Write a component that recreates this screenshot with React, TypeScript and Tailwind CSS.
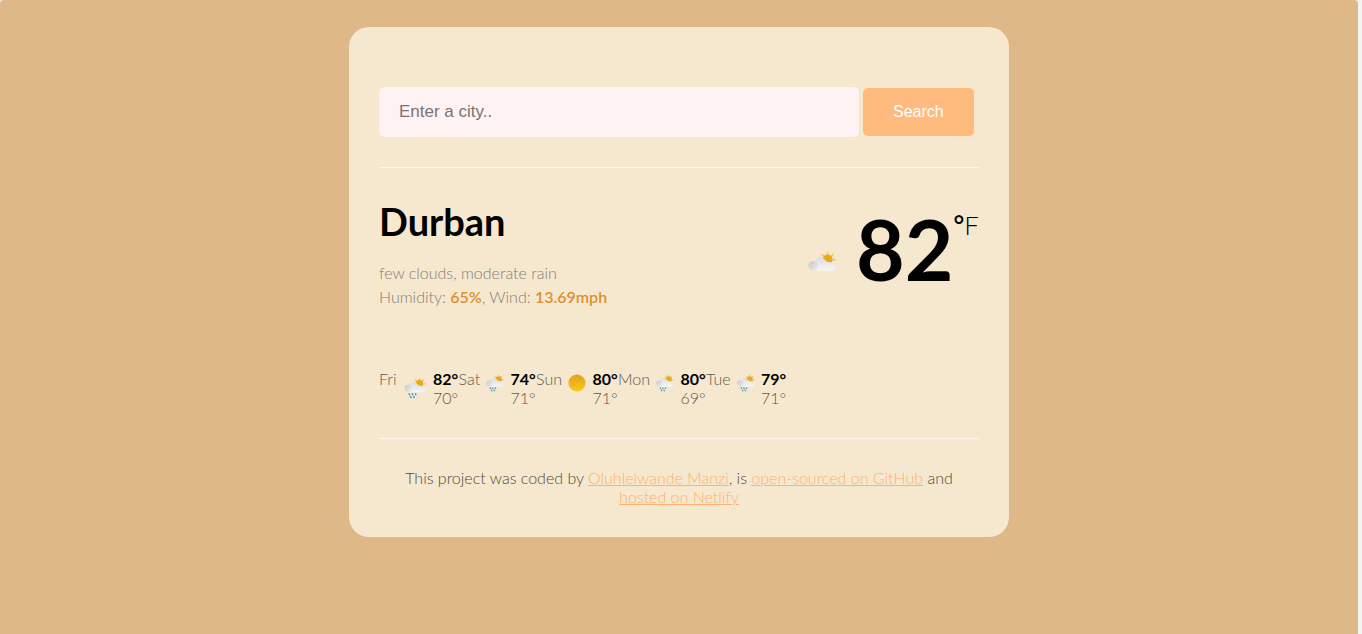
type WeatherKind = "clouds" | "rain" | "clear";

interface Day {
  name: string;
  kind: WeatherKind;
  high: number;
  low: number;
  large?: boolean;
}

const days: Day[] = [
  { name: "Fri", kind: "rain", high: 82, low: 70, large: true },
  { name: "Sat", kind: "rain", high: 74, low: 71 },
  { name: "Sun", kind: "clear", high: 80, low: 71 },
  { name: "Mon", kind: "rain", high: 80, low: 69 },
  { name: "Tue", kind: "rain", high: 79, low: 71 },
];

function WeatherIcon({ kind, className }: { kind: WeatherKind; className: string }) {
  if (kind === "clear") {
    return (
      <svg viewBox="0 0 18 18" className={className} aria-hidden="true">
        <defs>
          <linearGradient id="sun-disc" x1="0" y1="0" x2="0" y2="1">
            <stop offset="0" stopColor="#e4a018" />
            <stop offset="1" stopColor="#fac91e" />
          </linearGradient>
        </defs>
        <circle cx="9" cy="9" r="8.6" fill="url(#sun-disc)" />
        <circle cx="5" cy="11" r="0.8" fill="#dfa21a" />
        <circle cx="12" cy="5" r="0.8" fill="#d79916" />
      </svg>
    );
  }
  return (
    <svg viewBox="0 0 28 26" className={className} aria-hidden="true">
      <defs>
        <linearGradient id={`cloud-${kind}`} x1="0" y1="0" x2="0" y2="1">
          <stop offset="0" stopColor="#dcdcde" />
          <stop offset="1" stopColor="#f6f6f7" />
        </linearGradient>
        <linearGradient id={`puff-${kind}`} x1="0" y1="0" x2="1" y2="1">
          <stop offset="0" stopColor="#c9c9cb" />
          <stop offset="1" stopColor="#ececee" />
        </linearGradient>
      </defs>
      <g stroke="#f3bd45" strokeWidth="1.4" strokeLinecap="round">
        <path d="M19.500 1v1.500M14.200 2.600l1 1.200M24.800 2.400l-1 1.300M25.600 7.800l1.200.2M24.300 11.500l1.100.9" />
      </g>
      <circle cx="19.600" cy="7.600" r="5" fill="#e8aa1c" />
      <path
        d="M5 18.500C5 12 6.500 9.500 7.200 8.500A5.300 5.300 0 0 1 16 6.800c1 2 3.500 4 6.500 3.300 6.500.2 6.500 8.400 0 8.400z"
        fill={`url(#cloud-${kind})`}
      />
      <circle cx="5.200" cy="13.700" r="4.800" fill={`url(#puff-${kind})`} />
      {kind === "rain" && (
        <g stroke="#4a9dbd" strokeWidth="2" strokeLinecap="round">
          <path d="M6.500 20.500l.6 1M10.500 20.500l.6 1M14.500 20.500l.6 1M8.500 24l.6 1M12.500 24l.6 1" />
        </g>
      )}
    </svg>
  );
}

function Forecast() {
  return (
    <ul className="mt-[60px] flex flex-wrap">
      {days.map((day) => (
        <li key={day.name} className="flex items-start pb-px">
          <span className="font-light text-[#5f584e]">{day.name}</span>
          <WeatherIcon
            kind={day.kind}
            className={day.large ? "mx-[7px] mt-2 h-[22px] w-[22px]" : "mx-1.5 mt-[5px] h-[18px] w-[18px]"}
          />
          <span className="flex w-[26px] flex-col items-center">
            <strong className="font-bold text-black">{day.high}°</strong>
            <span className="font-light text-[#5f584e]">{day.low}°</span>
          </span>
        </li>
      ))}
    </ul>
  );
}

export default function App() {
  return (
    <div className="min-h-screen bg-[#f3f3f4] pr-1 font-['Lato',sans-serif] text-base leading-[19px]">
      <div className="min-h-screen rounded-t-[4px] bg-[#deb887] pt-[27px]">
        <main className="mx-auto max-w-[660px] rounded-[20px] bg-[#f6e8cf] px-[30px] pt-[60px] pb-[31px]">
          <form
            className="flex items-center gap-1 border-b border-[#fef2f2] pb-[30px]"
            onSubmit={(event) => event.preventDefault()}
          >
            <input
              type="search"
              aria-label="City"
              placeholder="Enter a city.."
              className="h-[50px] w-4/5 rounded-md bg-[#fef2f2] px-5 font-['Liberation_Sans',sans-serif] text-[17px] outline-none placeholder:text-[#757575]"
            />
            <button
              type="submit"
              className="h-12 rounded-[5px] bg-[#ffba7e] px-[30px] pb-0.5 font-['Liberation_Sans',sans-serif] text-[16px] text-white"
            >
              Search
            </button>
          </form>

          <section className="flex justify-between pt-[29px]">
            <div>
              <h1 className="text-[38px] leading-[48px] font-bold text-black">Durban</h1>
              <p className="mt-4 leading-6 font-light text-[#857c77]">
                few clouds, moderate rain
                <br />
                Humidity: <strong className="font-semibold text-[#dc9130]">65%</strong>, Wind:{" "}
                <strong className="font-semibold text-[#dc9130]">13.69mph</strong>
              </p>
            </div>
            <div className="flex items-start">
              <WeatherIcon kind="clouds" className="mt-[55px] mr-5 h-[26px] w-7" />
              <span className="text-[84px] leading-[104px] font-bold text-black">82</span>
              <span className="pt-3 text-[26px] leading-[32px] font-light text-black">
                <span className="font-semibold">°</span>F
              </span>
            </div>
          </section>

          <Forecast />

          <footer className="mt-[30px] border-t border-[#fef2f2] px-5 pt-[29px] text-center font-light text-[#4f483e]">
            This project was coded by{" "}
            <a href="#author" className="text-[#ffb06c] underline">Oluhlelwande Manzi</a>, is{" "}
            <a href="#source" className="text-[#ffb06c] underline">open-sourced on GitHub</a> and{" "}
            <a href="#hosting" className="text-[#ffb06c] underline">hosted on Netlify</a>
          </footer>
        </main>
      </div>
    </div>
  );
}
